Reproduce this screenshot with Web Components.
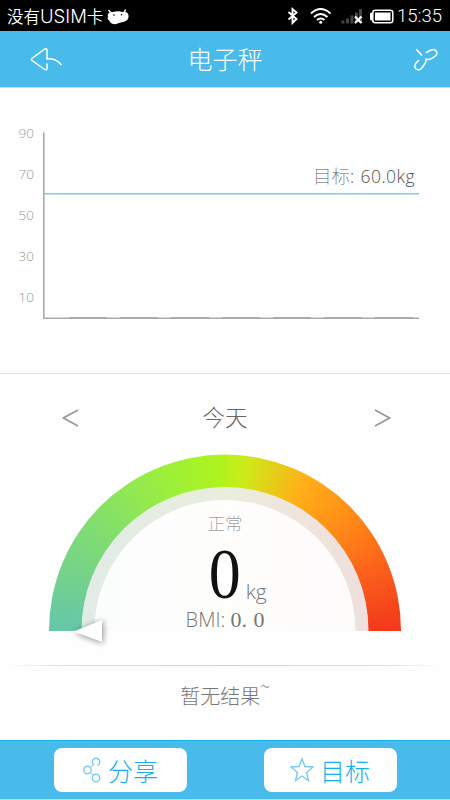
<!DOCTYPE html>
<html lang="zh-CN">
<head>
<meta charset="utf-8">
<title>电子秤</title>
<style>
html,body{margin:0;background:#fff}
body{font-family:"Noto Sans","Noto Sans CJK SC",sans-serif}
</style>
</head>
<body>
<scale-app></scale-app>
<script>
const define = (name, html) => customElements.define(name, class extends HTMLElement {
  constructor(){ super(); this.attachShadow({mode:'open'}).innerHTML = html; }
});

define('status-bar', `<style>
:host{display:flex;box-sizing:border-box;height:31px;background:#000;color:#fff;align-items:center;padding:1px 8px 0 7px}
.carrier{font:350 16.500px/28px Inter,"Noto Sans CJK SC",sans-serif;white-space:nowrap;width:97px}
.carrier i{font:350 18.500px/28px Inter,sans-serif}
svg{display:block;flex:none}
.face{margin-left:3px}.sp{flex:1}
.time{font:350 18.500px/28px Roboto,sans-serif;width:45px;white-space:nowrap;margin-left:3px}
</style>
<span class="carrier">没有<i>USIM</i>卡</span>
<svg class="face" width="22" height="17" viewBox="0 0 22 17"><path d="M1 9C0 5 3 3.500 6 4C9 3 13 3 15 4C20 3 22 6 21.500 9C21 14 15 14 12 15C9 17 4 16.500 2.500 13C1 12 0 10 1 9Z" fill="#fff"/><path d="m4 5-2.500-3M17 5l1.500-3.500" stroke="#fff" stroke-width="1.500"/><circle cx="7" cy="7" r=".8"/><circle cx="14.500" cy="6.800" r=".8"/></svg>
<span class="sp"></span>
<svg width="109" height="20" viewBox="286 6.500 109 20">
<path d="m289.500 12.500 8 7-4 4V9.500l4 3.500-8 7" fill="none" stroke="#fff" stroke-width="1.900"/>
<g fill="none" stroke="#fff" stroke-width="2"><path d="M312 14q9.500-9 19.500 0M315 17.500q6.500-6 13.500 0M318 20.500q3.700-3 7.500 0"/></g><circle cx="321.700" cy="22.800" r="1.500" fill="#fff"/>
<g fill="#444"><rect x="342.500" y="21" width="3" height="3"/><rect x="347" y="19" width="3" height="5"/><rect x="351.500" y="16" width="3" height="8"/><rect x="356" y="13" width="3" height="9"/><rect x="360" y="9.500" width="3" height="14"/></g>
<path d="m356 17 6.500 6.500m0-6.500-6.500 6.500" stroke="#fff" stroke-width="2.200"/>
<rect x="373.800" y="10.800" width="20" height="12.500" rx="2.500" fill="none" stroke="#fff" stroke-width="1.500"/><path d="M374 13h-1.500q-1.500 0-1.500 1.500v5q0 1.500 1.500 1.500h1.500z" fill="#fff"/><rect x="376" y="13" width="15.500" height="8" fill="#fff"/>
</svg>
<span class="time">15:35</span>`);

define('nav-header', `<style>
:host{display:grid;grid-template-columns:67px 1fr 67px;align-items:center;box-sizing:border-box;height:57px;background:#48bbeb;color:#fff;border-bottom:1px solid #a5e5fa}
.title{font:250 25px/54px "Noto Sans CJK SC",sans-serif;text-align:center;padding-bottom:2px}
svg{display:block;fill:none;stroke:#fff;stroke-width:1.500;stroke-linecap:round;stroke-linejoin:round}
.back{justify-self:end}.link{justify-self:end;margin-right:11px}
</style>
<svg class="back" width="37" height="28" viewBox="30 46 37 28"><path d="M47 65V69Q47 72 44 70L32 61.500Q30.500 60.500 32.500 59L44 50.500Q47 48.500 47 51.500V60Q55 59 61 65.500"/></svg>
<span class="title"><slot></slot></span>
<svg class="link" width="26" height="26" viewBox="413 46 26 26"><path d="m416.500 49.500 5 5.500M426.500 52.500 431 50C434 48.500 436.500 50.500 437 53C437 56 433.500 57.500 430.500 59Q427.500 60 426 59M418.500 60.500C415 63.500 413.500 66 416 69C419.500 71.500 422 68 424 65Q426.500 62 426 59"/></svg>`);

define('weight-chart', `<style>
:host{display:block;height:285px;border-bottom:1px solid #e2e2e2}
svg{display:block}
.tick{font:300 13.500px "Open Sans","Noto Sans",sans-serif;fill:#999}
.goal{font:300 17.500px "Open Sans","Noto Sans",sans-serif;fill:#555}
.goal.cn{font:100 18.500px "Noto Sans CJK SC",sans-serif}
</style>
<svg width="450" height="285" viewBox="0 88 450 285">
<g class="tick"><text x="18.500" y="138">90</text><text x="18.500" y="179">70</text><text x="18.500" y="220">50</text><text x="18.500" y="261">30</text><text x="18.500" y="302">10</text></g>
<path d="M43.800 132.500V318.300H419" fill="none" stroke="#aaa" stroke-width="1.600"/>
<path d="M69 317.500H419" stroke="#91b5ca" stroke-width="1" stroke-dasharray="38 13"/>
<path d="M44 193.700H419" stroke="#80caef" stroke-width="1.600"/>
<text class="goal cn" x="313" y="183">目标</text><text class="goal" x="350" y="183">:</text><text class="goal" x="360.500" y="183" textLength="54">60.0kg</text>
</svg>`);

define('date-picker', `<style>
:host{display:flex;height:80px;align-items:center;justify-content:space-between;padding:3px 59px 0 62px;box-sizing:border-box;color:#666;font:200 22.500px/32px "Noto Sans CJK SC",sans-serif}
svg{fill:none;stroke:#999;stroke-width:1.700;display:block;margin-top:5px}
span{margin-right:3px}
</style>
<svg width="18" height="20"><path d="M16 2 1.500 10 16 18"/></svg><span><slot></slot></span><svg width="18" height="20"><path d="m2 2 14.500 8L2 18"/></svg>`);

define('bmi-gauge', `<style>
:host{display:grid;width:352px;height:177px;margin:0 auto 0 49px}
.ring,.pale,.face,.text{grid-area:1/1}
.ring{background:conic-gradient(from -90deg at 176px 176.500px,#65c6aa 0,#87e165 45deg,#9df03a 70deg,#aef31d 88deg,#cceb19 97deg,#ffb018 118deg,#ff8b18 138deg,#fc601b 158deg,#f2381b 180deg);clip-path:path(evenodd,'M0 177V176.500A176 176 0 0 1 352 176.500V177ZM33 177V176.500A143 143 0 0 1 319 176.500V177Z')}
.pale{background:linear-gradient(90deg,#e0ebe8,#e9eedd 52%,#f0e6dc 65%,#eedddd);clip-path:path('M32.500 177V176.500A143.500 143.500 0 0 1 319.500 176.500V177H306V176.500A130 130 0 0 0 46 176.500V177Z')}
.face{background:linear-gradient(90deg,#fafdfd,#fefefc 50%,#fdf9fa);clip-path:path('M45.500 177V176.500A130.500 130.500 0 0 1 306.500 176.500V177Z')}
.text{display:grid;grid-template-rows:29px 65px 33px;padding-top:53px;justify-items:center;height:124px;color:#777;position:relative}
.level{font:100 17.500px/26px "Noto Sans CJK SC",sans-serif;margin-top:3px}
.value{display:flex;align-items:flex-end;height:65px;margin-left:24px}
.num{display:inline-block;font:400 71px/50px "Liberation Serif",serif;color:#111;transform:scaleX(.9);margin-bottom:2px}
.unit{font:300 21px/24px "Open Sans",sans-serif;color:#777;margin:0 0 -2px 3px}
.bmi{font:300 20px/28px "Open Sans",sans-serif;white-space:pre;margin-top:5px}
.bmi b{font:400 22px/28px "Liberation Serif",serif;word-spacing:1px}
.needle{position:absolute;left:12px;top:156px;overflow:visible;filter:drop-shadow(1px 1px 3px #0007)}
</style>
<div class="ring"></div><div class="pale"></div><div class="face"></div>
<div class="text"><span class="level">正常</span><span class="value"><span class="num">0</span><span class="unit">kg</span></span><span class="bmi">BMI: <b>0. 0</b></span>
<svg class="needle" width="50" height="45"><path d="M12.500 21.500 41 10V32Z" fill="#fff"/></svg></div>`);

define('result-note', `<style>
:host{display:block;padding-top:34px;height:75px}
.rule{height:1px;background:linear-gradient(90deg,transparent 1%,#ddd 15%,#d5d5d5 50%,#ddd 85%,transparent 98%)}
.note{font:200 20px/30px "Noto Sans CJK SC",sans-serif;color:#777;text-align:center;padding-top:15px}
sup{font-size:18px;line-height:0;vertical-align:11px}
</style><div class="rule"></div><div class="note"><slot></slot><sup>~</sup></div>`);

define('action-button', `<style>
:host{display:flex;align-items:center;justify-content:center;width:133px;height:44px;background:#fff;border-radius:8px;color:#18b0eb;font:200 25px/44px "Noto Sans CJK SC",sans-serif;gap:6px;box-sizing:border-box}
::slotted(svg){display:block;fill:none;stroke:#7acbf0;stroke-width:1.400}
</style><slot name="icon"></slot><span><slot></slot></span>`);

define('bottom-bar', `<style>
:host{display:flex;box-sizing:border-box;height:60px;background:#48bbeb;border-top:1px solid #16b4ed;border-bottom:1px solid #a5e5fa;justify-content:space-between;padding:6.500px 53.500px 0}
</style><slot></slot>`);

define('scale-app', `<style>
:host{display:block;width:450px;height:800px;overflow:hidden;background:#fefefe}
</style>
<status-bar></status-bar><nav-header>电子秤</nav-header><weight-chart></weight-chart><date-picker>今天</date-picker><bmi-gauge></bmi-gauge><result-note>暂无结果</result-note>
<bottom-bar>
<action-button><svg slot="icon" width="20" height="28"><path d="M12 9.200A3.800 3.800 0 1 1 15.500 9.500"/><circle cx="5.500" cy="14" r="3.800"/><circle cx="14" cy="22" r="3.800"/><path d="m8.500 11.500 3-3m-3 8 3 3" stroke-width="1"/></svg>分享</action-button>
<action-button><svg slot="icon" width="24" height="26"><path d="m12 2 3 7.500 8 .5-6.500 5.500 2 8L12 19l-6.500 4.500 2-8L1 10l8-.5Z"/></svg>目标</action-button>
</bottom-bar>`);
</script>
</body>
</html>
